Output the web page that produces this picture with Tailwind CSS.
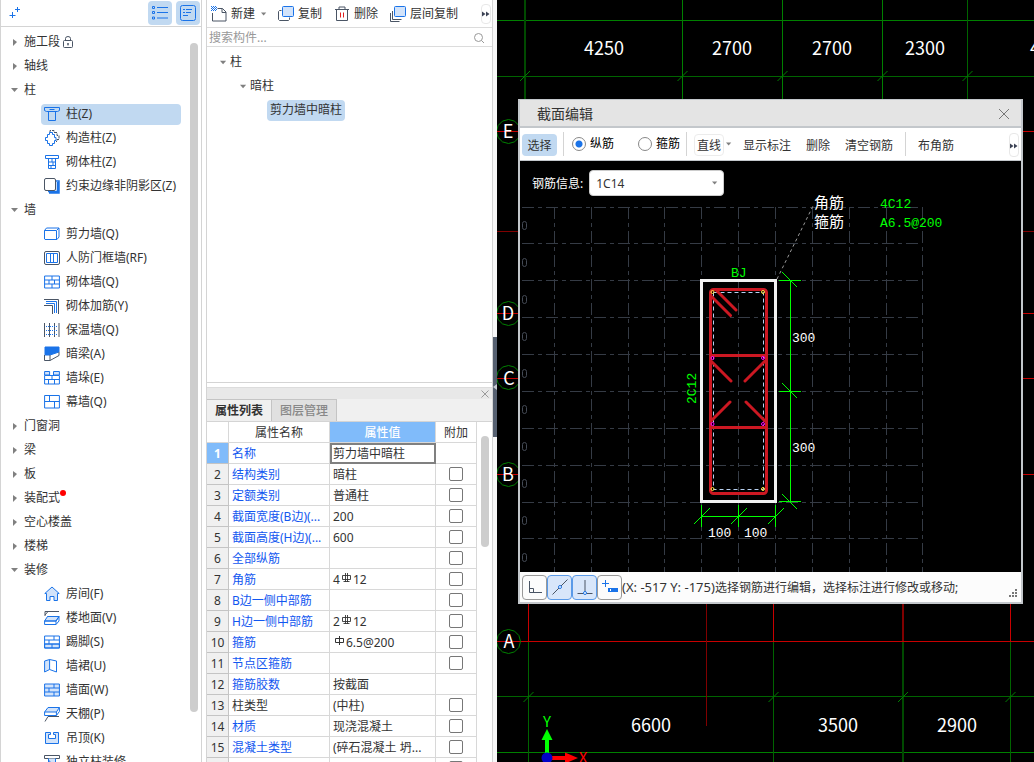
<!DOCTYPE html>
<html lang="zh-CN">
<head>
<meta charset="utf-8">
<title>截面编辑</title>
<script src="https://cdn.jsdelivr.net/npm/@tailwindcss/browser@4"></script>
</head>
<body class="flex h-screen overflow-hidden bg-white font-['Noto_Sans','Noto_Sans_CJK_SC',sans-serif] text-xs text-[#333]">

<svg class="hidden">
  <symbol id="col" viewBox="0 0 16 16"><path d="M.5 1.500h15v3l-2 1h-11l-2-1zM4.500 5.500v9h7v-9M5.500 3.500h5"/></symbol>
  <symbol id="gz" viewBox="0 0 16 16"><path d="M6 2.500V.500h4v2h3v3h2v4h-2v2h-1" stroke="#4a5565" stroke-dasharray="3 1"/><path d="M3.500 4.500h2v-2h3v2h2v3h1.500v3h-1.500v3h-2v2h-3v-2h-2v-3h-2v-3h2z" stroke-linejoin="round"/></symbol>
  <symbol id="qtz" viewBox="0 0 16 16"><path d="M1.500 1.500h13v3h-13zM4.500 4.500v10h7v-10M4.500 8h7M4.500 11.500h7M8 4.500V8M9 8v3.500M7 11.500v3"/></symbol>
  <symbol id="ys" viewBox="0 0 16 16"><path d="M4 13.500h9.500V4M5 15h10V5M12 3h3v2" stroke-width="1.500"/><rect x=".500" y=".500" width="11" height="12" rx="1.500" fill="#fff" stroke="#4a5565"/></symbol>
  <symbol id="jlq" viewBox="0 0 16 16"><path d="M.500 4.500l2-2.500h12.500v9l-2 2.500H1l-.500-.500zM.500 4.500h12v8.500M13 4l2-2"/></symbol>
  <symbol id="rf" viewBox="0 0 16 16"><rect x=".500" y="1.500" width="15" height="13" rx="1.500" stroke="#4a5565"/><path d="M2.500 3.500h11v9h-11zM6.500 3.500v9M9.500 3.500v9"/></symbol>
  <symbol id="brick" viewBox="0 0 16 16"><path d="M.600 2h14.800v12H.600zM.600 6h14.800M.600 10h14.800M8 2v4M5 6v4M10.500 6v4M8 10v4"/></symbol>
  <symbol id="jj" viewBox="0 0 16 16"><path d="M0 1.500h14.500V16M0 7.500h8.500V16" stroke="#4a5565"/><path d="M2 3.500h10.500V15M2 5.500h8.500V15"/></symbol>
  <symbol id="bw" viewBox="0 0 16 16"><path d="M.500 1v14M5.500 1v14M10.500 1v14M15 1v14" stroke="#4a5565"/><path d="M2 4.500h12M2 8.500h12M2 12.500h12" stroke-dasharray="1 1"/></symbol>
  <symbol id="al" viewBox="0 0 16 16"><path d="M1 1h14v5L6 9H1z" fill="#1a73e8"/><path d="M.500 9v5.500H6V9M6 14.500l9-5V6" stroke="#4a5565"/></symbol>
  <symbol id="duo" viewBox="0 0 16 16"><path d="M.600 5V1.500h5V5zM9.500 5V1.500h5.900V5z" fill="#d2e3fa"/><path d="M.600 5.500h14.800v8.500H.600zM.600 9.500h14.800M8 5.500v4M4.500 9.500V14M10.500 9.500V14"/></symbol>
  <symbol id="mq" viewBox="0 0 16 16"><path d="M.600 1.500h14.800v12.500H.600zM.600 7.500h14.800M5.500 1.500v6M10.500 7.500V14"/></symbol>
  <symbol id="fj" viewBox="0 0 16 16"><path d="M.800 7.500L8 1l7.200 6.500h-1.700v7h-3.500v-4H6v4H2.500v-7z" fill="#d2e3fa"/></symbol>
  <symbol id="ldm" viewBox="0 0 16 16"><path d="M1 6V1.500h14M1 5l3-3.500" stroke="#4a5565"/><path d="M3.500 6.500h11.500l-3 4.500H.600z" fill="#d2e3fa"/><path d="M3.500 6.500H15L12 11H.600v3.500H12l3-3.500V6.500M12 11v3.500"/></symbol>
  <symbol id="tj" viewBox="0 0 16 16"><path d="M.600 10h14.800v4H.600z" fill="#d2e3fa"/><path d="M.600 2h14.800v12H.600zM.600 6h14.800M.600 10h14.800M10 2v4M5 6v4M8 10v4"/></symbol>
  <symbol id="qq" viewBox="0 0 16 16"><path d="M.600 3l5-1.500v10L.600 14z" fill="#d2e3fa"/><path d="M5.600 1.500L12.500 3v11l-6.900-2.500"/></symbol>
  <symbol id="qm" viewBox="0 0 16 16"><path d="M.600 2h14.800v12H.600z" fill="#d2e3fa"/><path d="M.600 6h14.800M.600 10h14.800M10 2v4M5 6v4M10 10v4"/></symbol>
  <symbol id="tp" viewBox="0 0 16 16"><path d="M4 1.500h11.400l-3 4.500H.600z" fill="#d2e3fa"/><path d="M.600 6v3.500h11.800l3-4V1.500M12.400 6v3.500"/><path d="M4 10.500l-3 5M4 10.500h11" stroke="#4a5565"/></symbol>
  <symbol id="dd" viewBox="0 0 16 16"><path d="M1.500 2.500h5v2h-2v4h7v-4h-2v-2h5v11h-13z" fill="#d2e3fa"/></symbol>
  <symbol id="dlz" viewBox="0 0 16 16"><path d="M.500 1.500h15v3H.500z" stroke="#4a5565"/><path d="M4.500 4.500v10h7v-10M4.500 6l7 8" fill="#d2e3fa"/></symbol>
  <symbol id="r" viewBox="0 0 8 8"><path d="M2 1l4 3-4 4z" fill="#808080" stroke="none"/></symbol>
  <symbol id="d" viewBox="0 0 8 8"><path d="M0 2h7L3.500 6z" fill="#808080" stroke="none"/></symbol>
  <symbol id="more" viewBox="0 0 8 8"><path d="M0 1.500L3.500 4 0 6.500zM4 1.500L7.500 4 4 6.500z" fill="#3c4254" stroke="none"/></symbol>
  <symbol id="g3" viewBox="0 0 10 12"><path d="M.500 2.500h8v4h-8zM3.500 0v9M5.500 0v9M1.500 8.500h6" stroke="#333" stroke-width=".9"/></symbol>
  <symbol id="g1" viewBox="0 0 10 12"><path d="M.500 2.500h8v4h-8zM4.500 0v9" stroke="#333"/></symbol>
</svg>

<!-- Component tree -->
<aside class="flex w-[202px] shrink-0 flex-col overflow-hidden border-x border-[#d4d4d4]">
  <header class="flex h-[27px] shrink-0 items-center border-b border-[#d4d4d4] pr-px pl-2">
    <svg class="size-3" viewBox="0 0 12 12" stroke="#1a73e8" fill="none"><path d="M3.500 5v6M.500 8.500h6M8.500 0v5M6 2.500h5"/></svg>
    <button aria-label="列表" class="ml-auto grid size-6 place-items-center rounded bg-[#c1d9f1]"><svg class="size-4" viewBox="0 0 16 16" stroke="#1a73e8" fill="none"><path d="M.500 1.500h2v2h-2zM.500 6.500h2v2h-2zM.500 12h2v2h-2zM5 2.500h11M5 7.500h11M5 13h11"/></svg></button>
    <button aria-label="详情" class="ml-1 grid size-6 place-items-center rounded bg-[#c1d9f1]"><svg class="size-4" viewBox="0 0 16 16" stroke="#1a73e8" fill="none"><rect x=".500" y=".500" width="15" height="15" rx="2"/><path d="M3 4.500h2M6 4.500h6M3 7.500h2M6 7.500h5M3 10.500h5"/></svg></button>
  </header>
  <div class="flex min-h-0 flex-1">
    <ul class="min-w-0 flex-1 pt-[3px] whitespace-nowrap [&>li]:flex [&>li]:h-6 [&>li]:items-center [&>li]:pl-[10px] [&>li>a]:flex [&>li>a]:h-[21px] [&>li>a]:w-[140px] [&>li>a]:items-center [&>li>a]:gap-[6px] [&>li>a]:rounded [&>li>a]:pl-[3px] [&>li>a]:ml-[30px] [&>li>svg]:mr-[5px] [&>li>svg]:size-2 [&_a>svg]:size-4 [&_a>svg]:shrink-0 [&_a>svg]:fill-none [&_a>svg]:stroke-[#1a73e8]">
      <li><svg><use href="#r"/></svg>施工段<svg class="ml-0.5 !size-3" viewBox="0 0 12 12" fill="none" stroke="#4a5565"><rect x="1.500" y="4.500" width="9" height="7" rx="1"/><path d="M3.500 4.500v-2q0-2 2.500-2t2.500 2v2M6 7v2.500M5 8h2"/></svg></li>
      <li><svg><use href="#r"/></svg>轴线</li>
      <li><svg><use href="#d"/></svg>柱</li>
      <li><a href="#" class="bg-[#c1d9f1]"><svg><use href="#col"/></svg>柱(Z)</a></li>
      <li><a href="#"><svg><use href="#gz"/></svg>构造柱(Z)</a></li>
      <li><a href="#"><svg><use href="#qtz"/></svg>砌体柱(Z)</a></li>
      <li><a href="#"><svg><use href="#ys"/></svg>约束边缘非阴影区(Z)</a></li>
      <li><svg><use href="#d"/></svg>墙</li>
      <li><a href="#"><svg><use href="#jlq"/></svg>剪力墙(Q)</a></li>
      <li><a href="#"><svg><use href="#rf"/></svg>人防门框墙(RF)</a></li>
      <li><a href="#"><svg><use href="#brick"/></svg>砌体墙(Q)</a></li>
      <li><a href="#"><svg><use href="#jj"/></svg>砌体加筋(Y)</a></li>
      <li><a href="#"><svg><use href="#bw"/></svg>保温墙(Q)</a></li>
      <li><a href="#"><svg><use href="#al"/></svg>暗梁(A)</a></li>
      <li><a href="#"><svg><use href="#duo"/></svg>墙垛(E)</a></li>
      <li><a href="#"><svg><use href="#mq"/></svg>幕墙(Q)</a></li>
      <li><svg><use href="#r"/></svg>门窗洞</li>
      <li><svg><use href="#r"/></svg>梁</li>
      <li><svg><use href="#r"/></svg>板</li>
      <li><svg><use href="#r"/></svg>装配式<span class="mb-2.5 size-1.5 rounded-full bg-[#ff0000]"></span></li>
      <li><svg><use href="#r"/></svg>空心楼盖</li>
      <li><svg><use href="#r"/></svg>楼梯</li>
      <li><svg><use href="#d"/></svg>装修</li>
      <li><a href="#"><svg><use href="#fj"/></svg>房间(F)</a></li>
      <li><a href="#"><svg><use href="#ldm"/></svg>楼地面(V)</a></li>
      <li><a href="#"><svg><use href="#tj"/></svg>踢脚(S)</a></li>
      <li><a href="#"><svg><use href="#qq"/></svg>墙裙(U)</a></li>
      <li><a href="#"><svg><use href="#qm"/></svg>墙面(W)</a></li>
      <li><a href="#"><svg><use href="#tp"/></svg>天棚(P)</a></li>
      <li><a href="#"><svg><use href="#dd"/></svg>吊顶(K)</a></li>
      <li><a href="#"><svg><use href="#dlz"/></svg>独立柱装修</a></li>
    </ul>
    <div class="mt-4 mr-[3px] h-[91%] w-2 rounded bg-[#cdcdcd]"></div>
  </div>
</aside>

<!-- Component list and properties -->
<section class="ml-1 flex w-[287px] shrink-0 flex-col overflow-hidden border-x border-[#d4d4d4]">
  <div class="flex h-[383px] shrink-0 flex-col border-b border-[#d4d4d4]">
    <div class="flex h-7 shrink-0 items-center border-b border-[#dcdcdc] pt-px pl-1 whitespace-nowrap">
      <button class="flex items-center gap-1"><svg class="size-4" viewBox="0 0 16 16" fill="none" stroke="#4a5565"><path d="M6.500 2.500h5l3.500 3.500v9H1.500V7M11 2.500v4h4"/><path d="M0 .500h5M0 2.500h5M0 4.500h5" stroke="#1a73e8" stroke-dasharray="1 1"/><path d="M1 1.500h5M1 3.500h5" stroke="#1a73e8" stroke-dasharray="1 1"/></svg>新建</button>
      <svg class="ml-1.5 size-1.5" viewBox="0 0 8 8"><use href="#d"/></svg>
      <button class="ml-[11px] flex items-center gap-1"><svg class="size-4" viewBox="0 0 16 16" fill="none" stroke="#4a5565"><path d="M3.500 4.500h-2l-1 1v8l1 1h9l1-1v-2"/><rect x="4.500" y=".500" width="11" height="10" rx="1" fill="#d2e3fa" stroke="#1a73e8"/></svg>复制</button>
      <button class="ml-3 flex items-center gap-1"><svg class="size-4" viewBox="0 0 16 16" fill="none" stroke="#4a5565"><path d="M1 3.500h14M5 3V1h6v2M2.500 3.500v11h11v-11"/><path d="M6.500 6.500v5M9.500 6.500v5" stroke="#e02020"/></svg>删除</button>
      <button class="ml-3 flex items-center gap-1"><svg class="size-4" viewBox="0 0 16 16" fill="none" stroke="#4a5565"><path d="M.500 7v8.500h9M2.500 5v8.500h9"/><rect x="4.500" y=".500" width="11" height="10" rx="1" fill="#d2e3fa" stroke="#1a73e8"/></svg>层间复制</button>
      <button aria-label="更多" class="mr-px ml-auto grid h-5 w-2.5 place-items-center rounded border border-[#e8e8e8]"><svg class="size-2"><use href="#more"/></svg></button>
    </div>
    <label class="flex h-[19px] shrink-0 items-center border-b border-[#dcdcdc] pt-0.5 pr-[7px] pl-0.5">
      <input aria-label="搜索构件" placeholder="搜索构件..." class="h-4 min-w-0 flex-1 outline-none placeholder:text-[#999]">
      <svg class="size-3" viewBox="0 0 12 12" fill="none" stroke="#999"><circle cx="5.500" cy="5.500" r="4"/><path d="M8.500 8.500l2.500 2.500"/></svg>
    </label>
    <ul class="pt-[3px] [&>li]:flex [&>li]:h-6 [&>li]:items-center [&>li]:gap-[3px] [&_svg]:size-[7px]">
      <li class="pl-[13px]"><svg><use href="#d"/></svg>柱</li>
      <li class="pl-[33px]"><svg><use href="#d"/></svg>暗柱</li>
      <li class="pl-[60px]"><a href="#" class="flex h-[21px] items-center rounded-sm bg-[#c1d9f1] px-[3px]">剪力墙中暗柱</a></li>
    </ul>
  </div>
  <div class="mt-1 flex h-3 shrink-0 items-center justify-end border-t border-[#dcdcdc] bg-[#e8e8e8] pr-[3px]">
    <button aria-label="关闭"><svg class="size-2" viewBox="0 0 8 8" stroke="#999"><path d="M.500.500l7 7M7.500.500l-7 7"/></svg></button>
  </div>
  <div class="flex h-[23px] shrink-0 border-b border-[#d4d4d4] bg-[#f0f0f0]">
    <button class="w-[65px] border-t border-r border-[#c4c4c4] bg-[#f0f0f0] font-bold">属性列表</button>
    <button class="w-[65px] border-t border-r border-[#c4c4c4] bg-[#e0e0e0] font-medium text-[#888]">图层管理</button>
  </div>
  <div class="flex min-h-0 flex-1 items-start">
    <table class="w-[270px] table-fixed border-separate border-spacing-0 leading-[18px] whitespace-nowrap [&_td]:h-[21px] [&_td]:border-r [&_td]:border-b [&_td]:border-[#d8d8d8] [&_td]:p-0 [&_td:nth-child(2)]:pt-0.5 [&_td:nth-child(2)]:pl-[3px] [&_td:nth-child(2)]:text-[#1257f0] [&_td:nth-child(3)]:pt-0.5 [&_td:nth-child(3)]:pl-[3px] [&_th]:h-[21px] [&_th]:border-r [&_th]:border-b [&_th]:border-[#d8d8d8] [&_th]:p-0 [&_th]:pt-0.5 [&_th]:font-normal [&_tbody_th]:border-[#c4c4c4] [&_tbody_th]:bg-[#f0f0f0] [&_input]:mx-auto [&_input]:block [&_input]:size-3.5 [&_input]:appearance-none [&_input]:rounded-xs [&_input]:border [&_input]:border-[#777] [&_td>svg]:mr-px [&_td>svg]:mb-1 [&_td>svg]:ml-0.5 [&_td>svg]:inline [&_td>svg]:h-3 [&_td>svg]:w-2.5">
      <colgroup><col class="w-[22px]"><col class="w-[101px]"><col class="w-[106px]"><col class="w-[41px]"></colgroup>
      <thead><tr><th aria-label="序号"></th><th>属性名称</th><th class="bg-[#80bbfa] !font-medium text-white">属性值</th><th>附加</th></tr></thead>
      <tbody>
        <tr><th class="!bg-[#80bbfa] !font-bold text-white">1</th><td>名称</td><td class="outline-2 -outline-offset-2 outline-[#808080]">剪力墙中暗柱</td><td></td></tr>
        <tr><th>2</th><td>结构类别</td><td>暗柱</td><td><input type="checkbox" aria-label="结构类别"></td></tr>
        <tr><th>3</th><td>定额类别</td><td>普通柱</td><td><input type="checkbox" aria-label="定额类别"></td></tr>
        <tr><th>4</th><td>截面宽度(B边)(...</td><td>200</td><td><input type="checkbox" aria-label="截面宽度"></td></tr>
        <tr><th>5</th><td>截面高度(H边)(...</td><td>600</td><td><input type="checkbox" aria-label="截面高度"></td></tr>
        <tr><th>6</th><td>全部纵筋</td><td></td><td><input type="checkbox" aria-label="全部纵筋"></td></tr>
        <tr><th>7</th><td>角筋</td><td>4<svg fill="none"><use href="#g3"/></svg>12</td><td><input type="checkbox" aria-label="角筋"></td></tr>
        <tr><th>8</th><td>B边一侧中部筋</td><td></td><td><input type="checkbox" aria-label="B边一侧中部筋"></td></tr>
        <tr><th>9</th><td>H边一侧中部筋</td><td>2<svg fill="none"><use href="#g3"/></svg>12</td><td><input type="checkbox" aria-label="H边一侧中部筋"></td></tr>
        <tr><th>10</th><td>箍筋</td><td><svg fill="none"><use href="#g1"/></svg>6.5@200</td><td><input type="checkbox" aria-label="箍筋"></td></tr>
        <tr><th>11</th><td>节点区箍筋</td><td></td><td><input type="checkbox" aria-label="节点区箍筋"></td></tr>
        <tr><th>12</th><td>箍筋胶数</td><td>按截面</td><td></td></tr>
        <tr><th>13</th><td class="!text-[#333]">柱类型</td><td>(中柱)</td><td><input type="checkbox" aria-label="柱类型"></td></tr>
        <tr><th>14</th><td>材质</td><td>现浇混凝土</td><td><input type="checkbox" aria-label="材质"></td></tr>
        <tr><th>15</th><td>混凝土类型</td><td>(碎石混凝土 坍...</td><td><input type="checkbox" aria-label="混凝土类型"></td></tr>
        <tr><th></th><td></td><td></td><td><input type="checkbox" aria-label="其他"></td></tr>
      </tbody>
    </table>
    <div class="mt-3.5 ml-1 h-[111px] w-2 rounded bg-[#cdcdcd]"></div>
  </div>
</section>
<div class="flex w-1 shrink-0 flex-col bg-[#f8f8f8] pt-[337px]">
  <div class="flex h-[100px] items-center bg-[#566070]"><svg class="h-1.5 w-1" viewBox="0 0 4 6"><path d="M4 0v6L0 3z" fill="#c8ccd4"/></svg></div>
</div>

<!-- Drawing area -->
<main class="relative min-w-0 flex-1 overflow-hidden bg-black">
  <svg class="absolute inset-0 h-full w-full font-['Noto_Sans_CJK_SC',sans-serif]" fill="none">
    <g transform="translate(-497 0)">
      <g stroke="#008000"><path d="M497 20.500h2000M497 752.500h2000M682.500 0v99M782.500 0v99M882.500 0v99"/></g>
      <g stroke="#006400"><path d="M497 76.500h2000M497 696.500h2000M967.500 0v99M528.500 641v200M773.500 641v200M1010.500 641v200"/></g>
      <g stroke="#004a00" stroke-width="2"><path d="M525 0v99M903 641v200"/></g>
      <g stroke="#008000"><path d="M520 81l10-10M677.500 81l10-10M777.500 81l10-10M877.500 81l10-10M962.500 81l10-10M523.500 702l10-10M768.500 702l10-10M898 702l10-10M1005.500 702l10-10"/></g>
      <g stroke="#c80000"><path d="M497 131.500h2000M497 313.500h2000M497 378.500h2000M497 474.500h2000M497 641.500h2000M528.500 604v37M773.500 604v37M1010.500 604v37"/></g>
      <path d="M497 231.500h2000M706.500 604v122" stroke="#800000"/><path d="M903 604v37" stroke="#800000" stroke-width="2"/>
      <g stroke="#008000">
        <path id="bub" d="M508.500 119.500l6 1.600 4.400 4.400 1.600 6-1.600 6-4.400 4.400-6 1.600-6-1.600-4.400-4.400-1.600-6 1.600-6 4.400-4.400z"/>
        <use href="#bub" y="182"/><use href="#bub" y="246"/><use href="#bub" y="343"/><use href="#bub" y="510"/>
      </g>
      <g fill="#fff" font-size="18" text-anchor="middle">
        <text x="604" y="55">4250</text><text x="732" y="55">2700</text><text x="832" y="55">2700</text><text x="925" y="55">2300</text><text x="1050" y="55">4250</text>
        <text x="651" y="732">6600</text><text x="838" y="732">3500</text><text x="957" y="732">2900</text>
        <text x="508" y="138">E</text><text x="508" y="320">D</text><text x="509" y="385">C</text><text x="508" y="481">B</text><text x="509" y="648">A</text>
      </g>
      <path d="M547 754v-17" stroke="#0f0" stroke-width="4"/><path d="M541.500 740h11l-5.500-11z" fill="#0f0"/>
      <path d="M550 758h18" stroke="#f00" stroke-width="4"/><path d="M565 752.500v11l13-5.500z" fill="#f00"/>
      <circle cx="547" cy="758" r="5.500" fill="#0000c8"/>
      <text x="547" y="727" font-size="15" text-anchor="middle" fill="#0f0">Y</text><text x="583" y="763" font-size="15" text-anchor="middle" fill="#f00">X</text>
    </g>
  </svg>

  <!-- Section editor window -->
  <div role="dialog" aria-label="截面编辑" class="absolute top-[99px] left-[21px] flex h-[505px] w-[505px] flex-col border-2 border-t border-[#c3c7cb] bg-white">
    <header class="flex h-[28px] shrink-0 items-center border-b-2 border-[#c3c7cb] bg-[#e4e4e4] pt-px pr-[11px] pl-[17px] text-sm">截面编辑
      <button aria-label="关闭" class="ml-auto"><svg class="size-3" viewBox="0 0 12 12" stroke="#777"><path d="M1 1l10 10M11 1L1 11"/></svg></button>
    </header>
    <div class="flex h-[33px] shrink-0 items-center border-b border-[#c3c7cb] pl-0.5 whitespace-nowrap [&>button]:mt-0.5 [&>button]:pt-0.5">
      <button class="h-[22px] w-[35px] rounded bg-[#c1d9f1]">选择</button>
      <span class="ml-1.5 h-6 w-px bg-[#d4d4d4]"></span>
      <label class="ml-2 flex items-center gap-1 text-black"><input type="radio" name="bar" checked class="size-3.5 appearance-none rounded-full border border-[#888] bg-white checked:bg-[radial-gradient(circle,#1a73e8_3px,white_4px)]">纵筋</label>
      <label class="ml-6 flex items-center gap-1 text-black"><input type="radio" name="bar" class="size-3.5 appearance-none rounded-full border border-[#888] bg-white">箍筋</label>
      <span class="ml-1.5 h-6 w-px bg-[#d4d4d4]"></span>
      <button class="ml-[7px] flex h-[22px] items-center rounded border border-[#ececec] px-0.5">直线</button>
      <svg class="ml-0.5 size-1.5" viewBox="0 0 8 8"><use href="#d"/></svg>
      <button class="ml-[11px]">显示标注</button>
      <button class="ml-[15px]">删除</button>
      <button class="ml-[15px]">清空钢筋</button>
      <span class="ml-3 h-6 w-px bg-[#d4d4d4]"></span>
      <button class="ml-3">布角筋</button>
      <button aria-label="更多" class="mr-0.5 ml-auto grid h-6 w-2.5 place-items-center rounded border border-[#e8e8e8]"><svg class="size-2"><use href="#more"/></svg></button>
    </div>
    <div class="relative min-h-0 flex-1 bg-black">
      <svg class="absolute inset-0 h-full w-full" fill="none">
        <g transform="translate(-520 -161)">
          <path stroke="#353b45" stroke-dasharray="12 4 4 4" d="M522 207.500h400M522 243.500h400M522 280.500h400M522 317.500h400M522 354.500h400M522 391.500h400M522 428.500h400M522 465.500h400M522 502.500h400M522 538.500h400M554.500 207v365M591.500 207v365M628.500 207v365M664.500 207v365M701.500 207v365M738.500 207v365M775.500 207v365M812.500 207v365M849.500 207v365M886.500 207v365M922.500 207v365"/>
          <g stroke="#444a55"><rect id="o" x="522.500" y="221.500" width="4" height="8" rx="2"/><use href="#o" y="37"/><use href="#o" y="74"/><use href="#o" y="111"/><use href="#o" y="148"/><use href="#o" y="184"/><use href="#o" y="221"/><use href="#o" y="258"/><use href="#o" y="295"/><use href="#o" y="332"/></g>
          <path d="M777 279l36-73" stroke="#999" stroke-dasharray="3 3"/>
          <path d="M701.500 280.500h74v221h-74z" stroke="#f2f2f2" stroke-width="3"/>
          <path d="M713.500 292.500h50v197h-50z" stroke="#b8d0f0" stroke-dasharray="4 3"/>
          <g stroke="#cc1822" stroke-width="3" stroke-linecap="round"><rect x="710.500" y="289.500" width="56" height="204" rx="3"/><path d="M710.500 355.500h56M710.500 427.500h56M711 361l20 20M765 361l-20 20M711 421l19-19M765 421l-19-19M711 296l19.500 19.500M717 291l19 19"/></g>
          <g stroke="#ffe040"><circle cx="712.500" cy="292" r="1.500"/><circle cx="763" cy="292" r="1.500"/><circle cx="712.500" cy="489" r="1.500"/><circle cx="763" cy="489" r="1.500"/></g>
          <g stroke="#f0f"><circle cx="712.500" cy="358" r="1.500"/><circle cx="763" cy="358" r="1.500"/><circle cx="712.500" cy="424" r="1.500"/><circle cx="763" cy="424" r="1.500"/></g>
          <path stroke="#0f0" d="M790.500 280v221M779 280.500h22M779 391.500h22M779 501.500h22M782 272l15 15M782 383l15 15M782 494l15 15M701 516.500h75M701.500 505v22M738.500 505v22M775.500 505v22M694 524l16-16M731 524l16-16M768 524l16-16"/>
          <g font-family="Liberation Mono, Noto Sans CJK SC, monospace" font-size="13">
            <g fill="#0f0"><text x="731" y="277">BJ</text><text x="880" y="208">4C12</text><text x="880" y="227">A6.5@200</text><text transform="translate(696 404) rotate(-90)">2C12</text></g>
            <g fill="#fff"><text x="792" y="342">300</text><text x="792" y="452">300</text><text x="708" y="537">100</text><text x="744" y="537">100</text></g>
            <g fill="#fff" font-size="15"><text x="814" y="208">角筋</text><text x="814" y="227">箍筋</text></g>
          </g>
        </g>
      </svg>
      <div class="relative flex items-center gap-1.5 pt-[9px] pl-3 text-white">
        <label for="info" class="pt-0.5">钢筋信息:</label>
        <select id="info" class="h-[26px] w-[135px] appearance-none rounded-sm border border-[#ccc] bg-white pt-px pl-1.5 text-[#333]"><option>1C14</option></select>
        <svg class="pointer-events-none -ml-[18px] size-1.5" viewBox="0 0 8 8"><use href="#d"/></svg>
      </div>
    </div>
    <footer class="flex h-[30px] shrink-0 items-center bg-[#fcfcfc] pl-0.5 whitespace-nowrap [&>button]:grid [&>button]:size-[25px] [&>button]:place-items-center [&>button]:rounded [&>button]:border [&>button]:border-[#999]">
      <button aria-label="正交"><svg class="size-4" viewBox="0 0 16 16" fill="none" stroke="#4a5565"><path d="M2.500 2v11.500H15M2.500 9.500h4v4"/></svg></button>
      <button aria-label="中点" class="!border-[#5a9ae8] bg-[#d8e6fa]"><svg class="size-4" viewBox="0 0 16 16" fill="none" stroke="#4a5565"><path d="M.500 15.500l15-15"/><circle cx="8" cy="8" r="1.500" fill="#fff" stroke="#1a73e8"/></svg></button>
      <button aria-label="垂点" class="!border-[#5a9ae8] bg-[#d8e6fa]"><svg class="size-4" viewBox="0 0 16 16" fill="none" stroke="#4a5565"><path d="M8 1v12M.500 14.500h15"/><circle cx="8" cy="14" r="1.500" fill="#fff" stroke="#1a73e8"/></svg></button>
      <button aria-label="动态输入"><svg class="size-4" viewBox="0 0 16 16" fill="none" stroke="#1a73e8"><path d="M0 4.500h7M3.500 1v7"/><rect x="6.500" y="9.500" width="9" height="3" fill="#1a73e8"/><path d="M8.500 10v2" stroke="#fff"/></svg></button>
      <p class="pt-px"><span class="text-[13px]">(X: -517 Y: -175)</span>选择钢筋进行编辑，选择标注进行修改或移动;</p>
      <svg class="mt-3 mr-1 ml-auto size-2" viewBox="0 0 8 8" fill="#777"><path d="M6 0h2v2H6zM3 3h2v2H3zM6 3h2v2H6zM0 6h2v2H0zM3 6h2v2H3zM6 6h2v2H6z"/></svg>
    </footer>
  </div>
</main>
</body>
</html>
